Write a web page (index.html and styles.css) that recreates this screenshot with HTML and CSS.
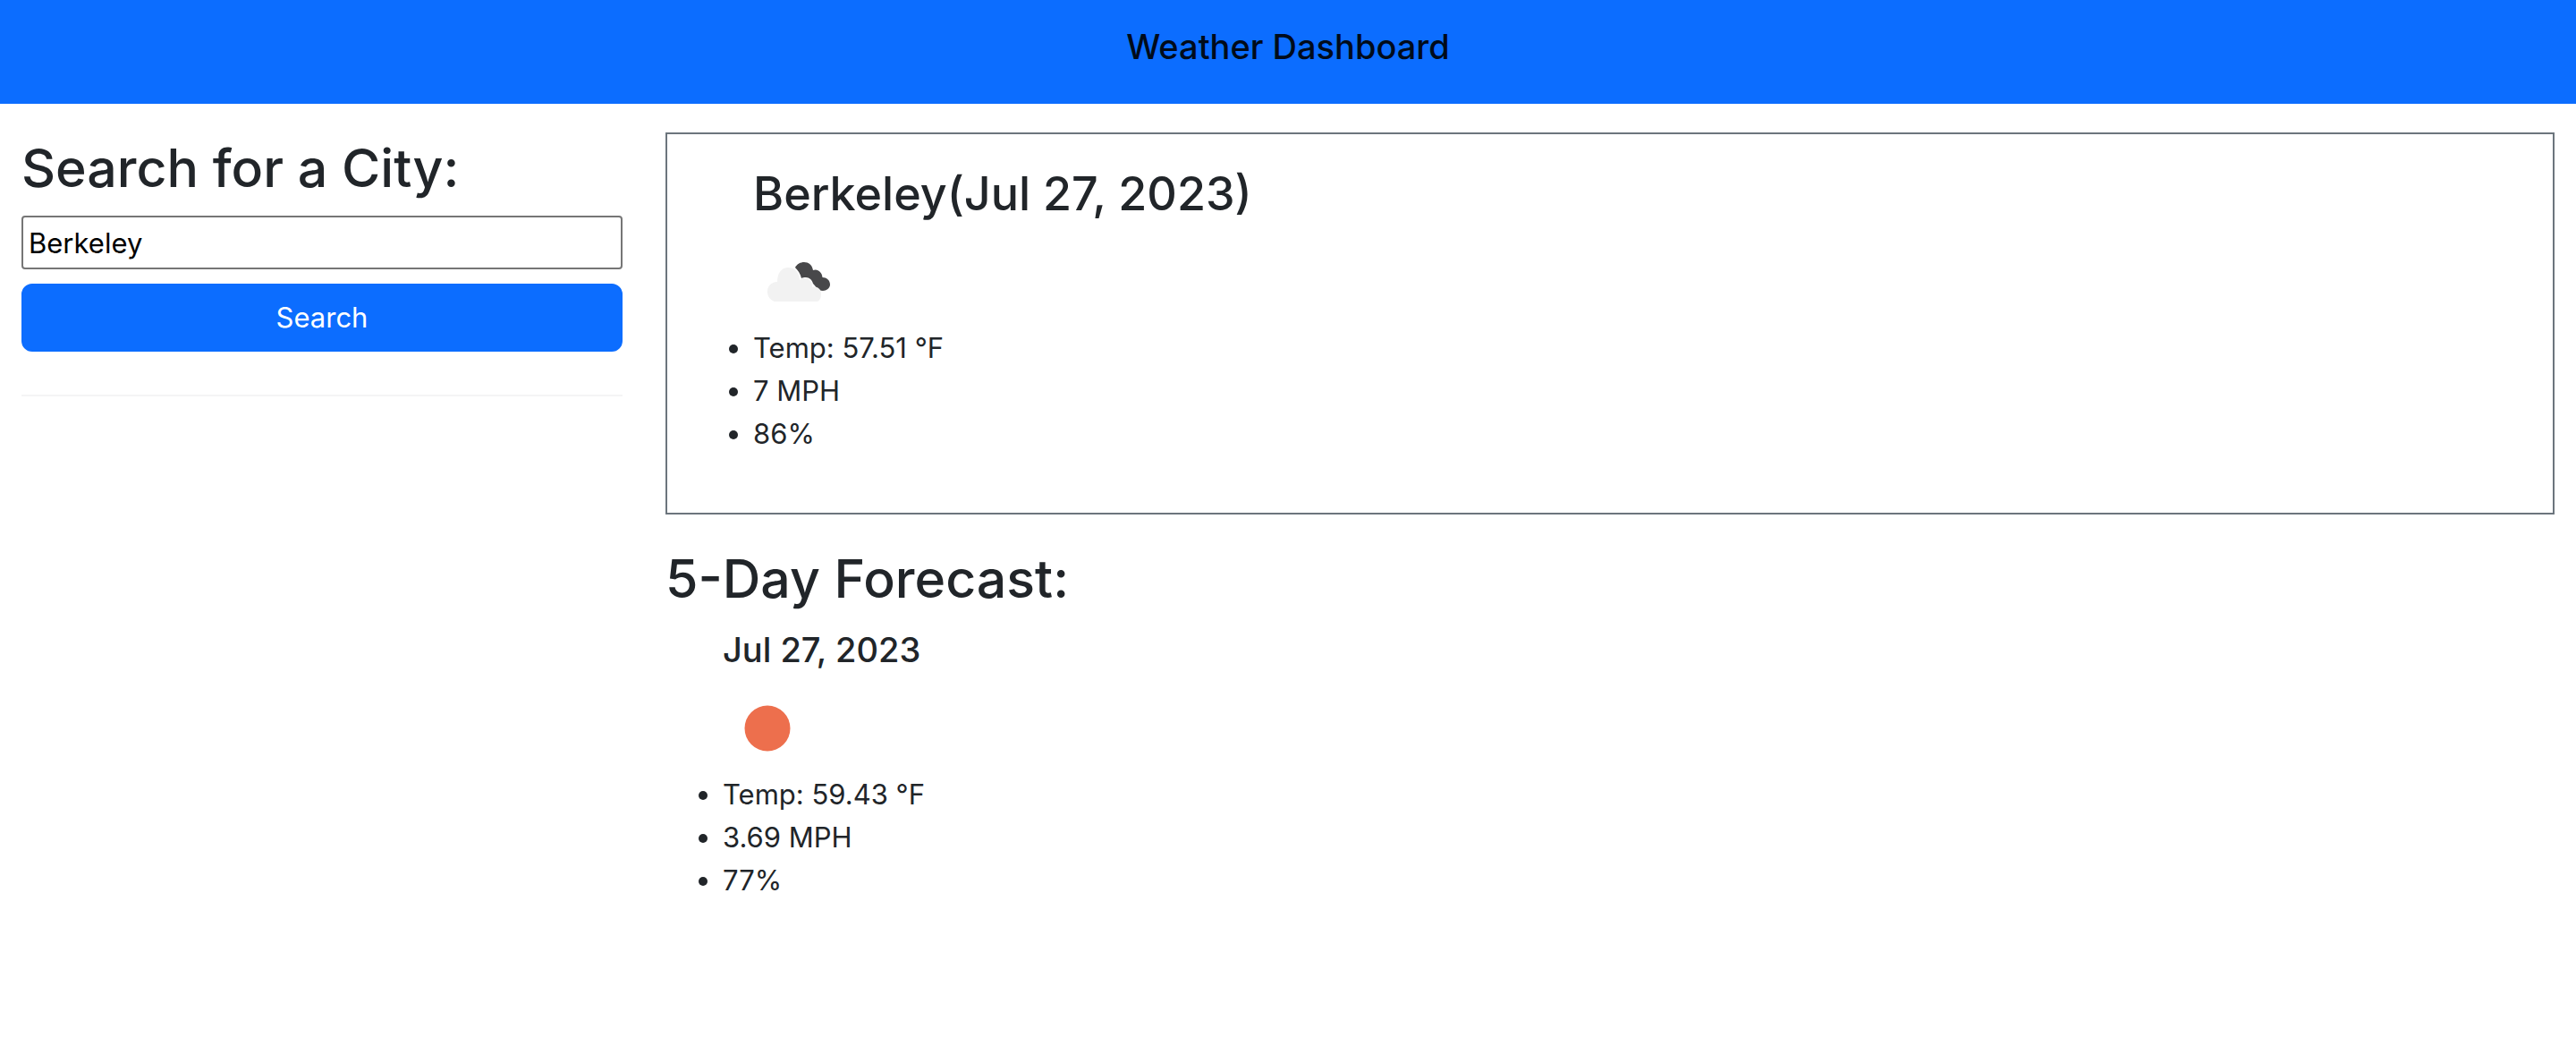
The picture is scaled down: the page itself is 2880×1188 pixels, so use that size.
FILE: index.html
```html
<!DOCTYPE html>
<html lang="en">
<head>
  <meta charset="utf-8">
  <meta name="viewport" content="width=device-width, initial-scale=1">
  <title>Weather Dashboard</title>
  <link rel="stylesheet" href="styles.css">
</head>
<body>
  <header class="navbar">
    <h1 class="navbar-title">Weather Dashboard</h1>
  </header>
  <main class="layout">
    <aside class="sidebar">
      <form class="search-form">
        <h2 class="section-title"><label for="city">Search for a City:</label></h2>
        <input class="search-input" id="city" type="text" value="Berkeley">
        <button class="search-button" type="button">Search</button>
      </form>
      <hr class="divider">
    </aside>
    <div class="content">
      <section class="today">
        <div class="weather">
          <h3 class="today-title">Berkeley(Jul 27, 2023)</h3>
          <svg class="weather-icon" viewBox="0 0 100 100" role="img" aria-label="Broken clouds">
            <path fill="#48484a" d="M47 34C49 30 53 28 57 28C62 28 66 31 67 37C72 35 77 39 77.500 45C82 45 86 48 86 53C86 57 82 60 78 60C75 60 73 59 71 57C69 54 68 53 67 52C66 48 63 45 59 45C57 45 55 45 54 46C53 41 50 37 47 34Z"/>
            <path fill="#f2f2f2" d="M24 72C19 70 16 66 16 61C16 55 20 50 27 50C27 40 32 34 39 34C47 34 52 40 52 48C59 43 67 48 66 56C72 54 77 59 76 65C76 68 74 71 72 72Z"/>
          </svg>
          <ul class="readings">
            <li>Temp: 57.51 °F</li>
            <li>7 MPH</li>
            <li>86%</li>
          </ul>
        </div>
      </section>
      <section class="forecast">
        <h2 class="section-title">5-Day Forecast:</h2>
        <div class="weather">
          <h4 class="day-title">Jul 27, 2023</h4>
          <svg class="weather-icon" viewBox="0 0 100 100" role="img" aria-label="Clear sky">
            <circle cx="50" cy="50" r="25.500" fill="#ed6f4d"/>
          </svg>
          <ul class="readings">
            <li>Temp: 59.43 °F</li>
            <li>3.69 MPH</li>
            <li>77%</li>
          </ul>
        </div>
      </section>
    </div>
  </main>
</body>
</html>
```
FILE: styles.css
```css
* {
  box-sizing: border-box;
}

body {
  margin: 0;
  background: #fff;
  color: #212529;
  font-family: Inter, "Liberation Sans", sans-serif;
  font-size: 31px;
  line-height: 48px;
}

h1,
h2,
h3,
h4,
ul {
  margin: 0;
}

h1,
h2,
h3,
h4 {
  font-weight: 500;
}

.navbar {
  padding: 28px 24px 40px;
  background: #0c6dff;
  text-align: center;
}

.navbar-title {
  color: #010b1a;
  font-size: 38px;
  line-height: 48px;
}

.layout {
  display: grid;
  grid-template-columns: 1fr 3fr;
  padding-top: 32px;
}

.sidebar,
.content {
  padding: 0 24px;
}

.search-form {
  display: flex;
  flex-direction: column;
  gap: 16px;
}

.section-title {
  padding-top: 3px;
  font-size: 59px;
  line-height: 74px;
}

.search-input {
  width: 100%;
  height: 60px;
  padding: 2px 6px;
  border: 2px solid #767676;
  border-radius: 4px;
  background: #fff;
  color: #000;
  font: inherit;
}

.search-button {
  padding: 12px 24px;
  border: 2px solid #0c6dff;
  border-radius: 12px;
  background: #0c6dff;
  color: #fff;
  font: inherit;
}

.divider {
  margin: 48px 0 0;
  border: 0;
  border-top: 2px solid #f4f4f5;
}

.today {
  padding: 32px;
  border: 2px solid #6c757d;
}

.forecast {
  margin-top: 32px;
}

.weather {
  padding-left: 64px;
}

.today-title {
  margin-bottom: 16px;
  padding-top: 3px;
  font-size: 52px;
  line-height: 64px;
}

.day-title {
  margin: 18px 0 14px;
  font-size: 38px;
  line-height: 48px;
}

.weather-icon {
  display: block;
  width: 100px;
  height: 100px;
}

.readings {
  margin-bottom: 32px;
  padding: 0;
}
```
